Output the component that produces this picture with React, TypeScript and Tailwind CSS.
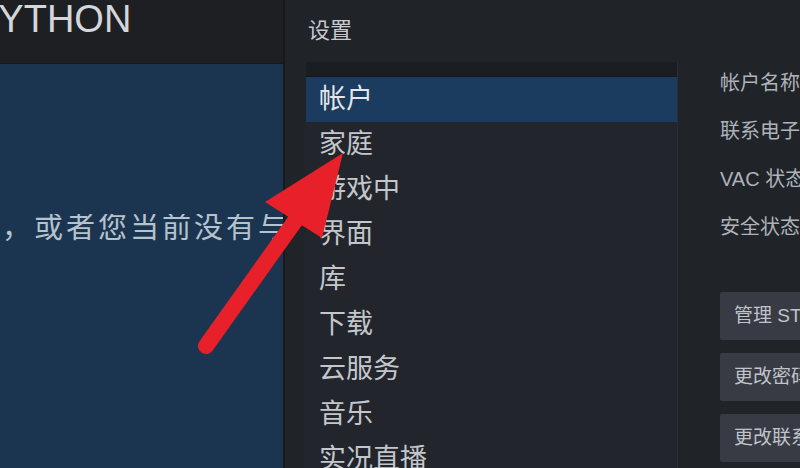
import React from "react";

const menu = ["帐户", "家庭", "游戏中", "界面", "库", "下载", "云服务", "音乐", "实况直播", "语音"];
const labels = ["帐户名称", "联系电子邮件", "VAC 状态", "安全状态"];
const buttons = ["管理 STEAM 令牌", "更改密码", "更改联系电子邮件地址"];

export default function App() {
  return (
    <div
      className="relative flex w-[800px] h-[468px] overflow-hidden bg-[#202328]"
      style={{ fontFamily: '"Liberation Sans", "Noto Sans CJK SC", sans-serif' }}
    >
      {/* background window */}
      <div className="flex flex-col w-[285px] shrink-0 bg-[#1b3550] border-r-2 border-[#17191d]">
        <div className="h-[64px] shrink-0 bg-[#1e1f22] border-b border-[#16181b] overflow-hidden">
          <div className="ml-[-27px] mt-[-3px] whitespace-nowrap text-[38px] leading-[44px] text-[#d4d6da]">
            PYTHON
          </div>
        </div>
        <div className="mt-[150px] overflow-hidden">
          <div className="ml-[-30px] whitespace-nowrap text-[29px] leading-[29px] tracking-[3px] text-[#b6c2cd]">
            号，或者您当前没有与 Steam
          </div>
        </div>
      </div>

      {/* settings dialog */}
      <div className="flex flex-col flex-1">
        <div className="h-[62px] shrink-0 flex items-center pl-[23px] pb-[2px] text-[22px] text-[#c6cacf]">
          设置
        </div>
        <div className="flex flex-1">
          <div className="ml-[21px] w-[372px] shrink-0 flex flex-col bg-[#22252b] border-r border-[#2a2d34]">
            <div className="h-[15px] bg-[#1a1d22] border-b border-[#15171b]" />
            {menu.map((m, i) => (
              <div
                key={m}
                className={
                  i === 0
                    ? "h-[45px] shrink-0 flex items-center pl-[13px] text-[27px] text-[#e4e7ea] bg-[#1b3b5f]"
                    : "h-[45px] shrink-0 flex items-center pl-[13px] text-[27px] text-[#c3c7cc]"
                }
              >
                {m}
              </div>
            ))}
          </div>
          <div className="ml-[42px] flex flex-col pt-[11px] whitespace-nowrap">
            <div className="flex flex-col gap-[28px] text-[20px] leading-[20px] text-[#aeb3ba]">
              {labels.map((l) => (
                <div key={l}>{l}</div>
              ))}
            </div>
            <div className="mt-[55px] flex flex-col gap-[13px]">
              {buttons.map((b) => (
                <div
                  key={b}
                  className="h-[48px] w-[300px] flex items-center pl-[14px] rounded-[2px] bg-[#383b43] text-[19px] text-[#c0c4ca]"
                >
                  {b}
                </div>
              ))}
            </div>
          </div>
        </div>
      </div>

      {/* annotation arrow */}
      <svg className="absolute left-0 top-0 pointer-events-none" width="800" height="468" viewBox="0 0 800 468">
        <line x1="206" y1="346" x2="300" y2="214" stroke="#e8202a" strokeWidth="16" strokeLinecap="round" />
        <polygon points="343,153 265,202 322,238" fill="#e8202a" />
      </svg>
    </div>
  );
}
